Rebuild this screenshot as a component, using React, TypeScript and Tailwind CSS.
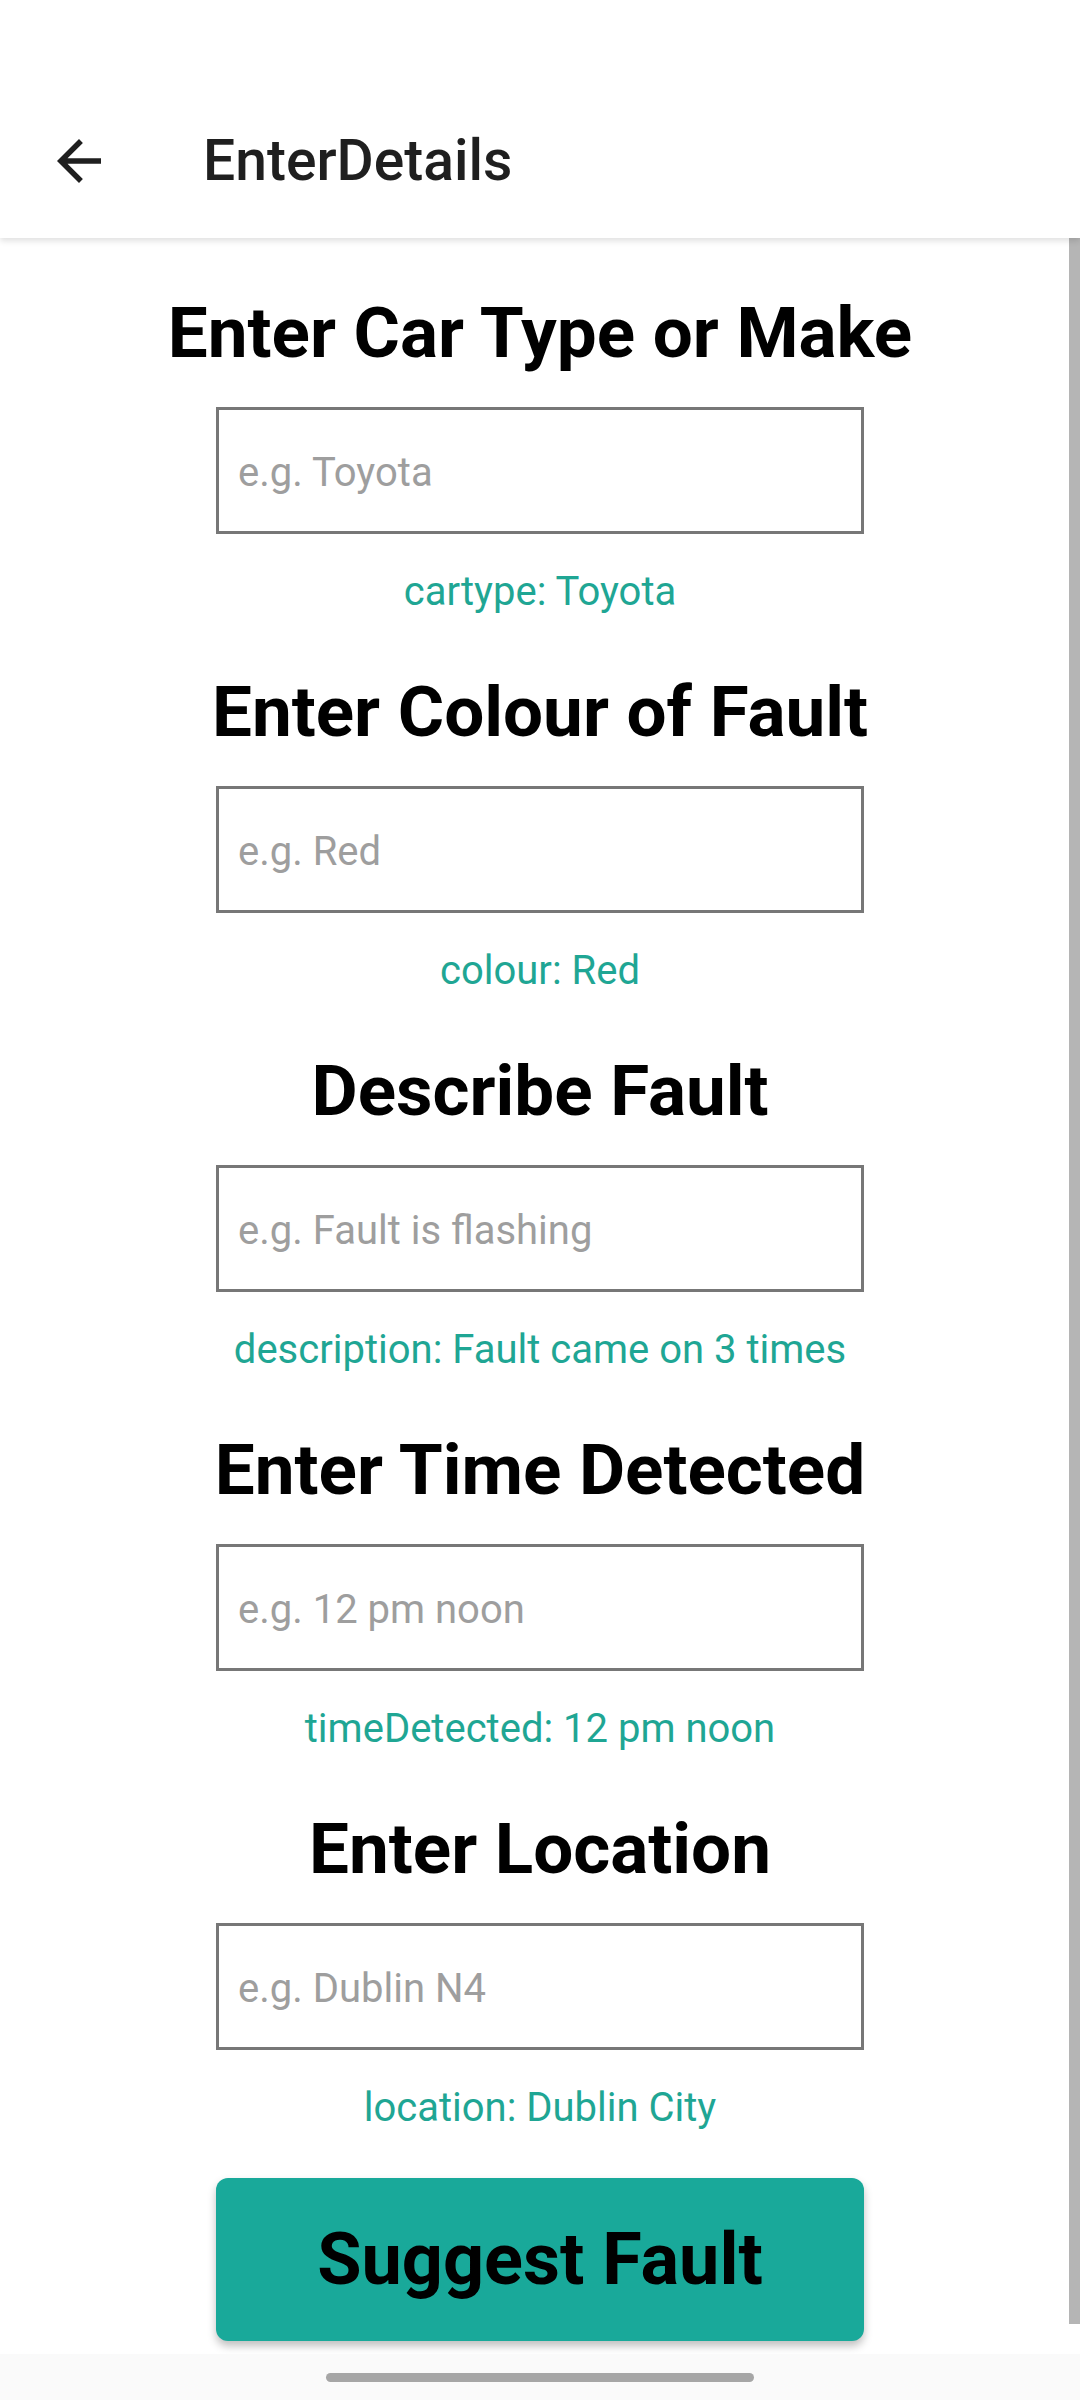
import { useState } from "react";

const fields = [
  { title: "Enter Car Type or Make", placeholder: "e.g. Toyota", label: "cartype", value: "Toyota" },
  { title: "Enter Colour of Fault", placeholder: "e.g. Red", label: "colour", value: "Red" },
  { title: "Describe Fault", placeholder: "e.g. Fault is flashing", label: "description", value: "Fault came on 3 times" },
  { title: "Enter Time Detected", placeholder: "e.g. 12 pm noon", label: "timeDetected", value: "12 pm noon" },
  { title: "Enter Location", placeholder: "e.g. Dublin N4", label: "location", value: "Dublin City" },
];

function BackArrow() {
  return (
    <svg viewBox="0 0 24 24" className="w-[66px] h-[66px]" fill="#1f1f1f">
      <path d="M20 11H7.83l5.59-5.59L12 4l-8 8 8 8 1.41-1.41L7.83 13H20v-2z" />
    </svg>
  );
}

function Field({ title, placeholder, label, value }: (typeof fields)[number]) {
  const [text, setText] = useState("");
  return (
    <section className="flex flex-col items-center mb-[55px]">
      <h2 className="text-[71px] leading-[84px] font-bold text-black">{title}</h2>
      <input
        value={text}
        onChange={(e) => setText(e.target.value)}
        placeholder={placeholder}
        className="mt-[32px] w-[648px] h-[127px] border-[3px] border-[#777777] px-[19px] pt-[3px] text-[40px] text-black placeholder:text-[#9e9e9e] outline-none"
      />
      <p className="mt-[34px] text-[40px] leading-[47px] text-[#1fa694]">
        {label}: {value}
      </p>
    </section>
  );
}

export default function App() {
  return (
    <div className="relative w-[1080px] h-[2400px] bg-white flex flex-col overflow-hidden font-['Roboto',sans-serif]">
      <header className="relative z-10 h-[238px] pt-[84px] bg-white shadow-[0_3px_6px_rgba(0,0,0,0.12)] flex items-center">
        <div className="ml-[46px]">
          <BackArrow />
        </div>
        <h1 className="ml-[91px] text-[57px] font-medium text-[#1f1f1f]">EnterDetails</h1>
      </header>

      <main className="flex-1 flex flex-col items-center pt-[53px]">
        {fields.map((f) => (
          <Field key={f.label} {...f} />
        ))}
        <button
          type="button"
          className="-mt-[8px] w-[648px] h-[163px] rounded-[12px] bg-[#19a99a] text-[72px] font-bold text-black shadow-[0_5px_8px_rgba(0,0,0,0.25)]"
        >
          Suggest Fault
        </button>
      </main>

      <div className="h-[46px] bg-[#fafafa] flex justify-center pt-[19px]">
        <div className="w-[428px] h-[9px] rounded-full bg-[#a6a6a6]" />
      </div>

      <div className="absolute right-0 top-[238px] w-[11px] h-[2086px] bg-[#b5b5b5]" />
    </div>
  );
}
